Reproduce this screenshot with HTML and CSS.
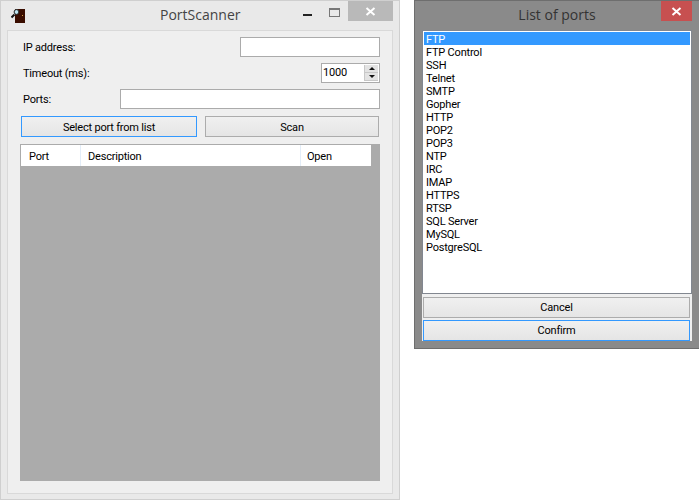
FILE: index.html
```html
<!DOCTYPE html>
<html lang="en">

<head>
    <meta charset="UTF-8">
    <title>PortScanner</title>
    <link rel="stylesheet" href="styles.css">
</head>

<body>

    <!-- Main window -->
    <div class="window main-window">
        <div class="titlebar">
            <svg class="app-icon" width="16" height="16" viewBox="0 0 16 16">
                <rect x="4" y="1" width="10" height="14" fill="#3a0d00"/>
                <rect x="11" y="7" width="1" height="1" fill="#d8a040"/>
                <path d="M0.5 9.5 L3.5 6.5" stroke="#111" stroke-width="2"/>
                <circle cx="5.5" cy="4" r="2.4" fill="#bfe6f2" stroke="#222" stroke-width="1"/>
            </svg>
            <div class="title">PortScanner</div>
            <div class="controls">
                <div class="minimize"></div>
                <div class="maximize"></div>
                <div class="close close-grey">
                    <svg width="11" height="9" viewBox="0 0 11 9"><path d="M1.5 1 L9.5 8 M9.5 1 L1.5 8" stroke="#fff" stroke-width="2"/></svg>
                </div>
            </div>
        </div>
        <div class="client">
            <div class="form-row">
                <label>IP address:</label>
                <input class="field ip-field" type="text">
            </div>
            <div class="form-row">
                <label>Timeout (ms):</label>
                <div class="spinner">
                    <span class="spinner-value">1000</span>
                    <div class="spinner-buttons">
                        <div class="spin-btn"><i class="arrow-up"></i></div>
                        <div class="spin-btn"><i class="arrow-down"></i></div>
                    </div>
                </div>
            </div>
            <div class="form-row">
                <label>Ports:</label>
                <input class="field ports-field" type="text">
            </div>
            <div class="button-row">
                <button class="btn btn-focus select-btn">Select port from list</button>
                <button class="btn scan-btn">Scan</button>
            </div>
            <div class="grid">
                <div class="grid-header">
                    <div class="col col-port">Port</div>
                    <div class="col col-desc">Description</div>
                    <div class="col col-open">Open</div>
                </div>
            </div>
        </div>
    </div>

    <!-- Port list window (inactive look) -->
    <div class="window list-window">
        <div class="titlebar">
            <div class="title">List of ports</div>
            <div class="close close-red">
                <svg width="11" height="9" viewBox="0 0 11 9"><path d="M1.5 1 L9.5 8 M9.5 1 L1.5 8" stroke="#fff" stroke-width="2"/></svg>
            </div>
        </div>
        <div class="list-client">
            <div class="listbox">
                <div class="item selected">FTP</div>
                <div class="item">FTP Control</div>
                <div class="item">SSH</div>
                <div class="item">Telnet</div>
                <div class="item">SMTP</div>
                <div class="item">Gopher</div>
                <div class="item">HTTP</div>
                <div class="item">POP2</div>
                <div class="item">POP3</div>
                <div class="item">NTP</div>
                <div class="item">IRC</div>
                <div class="item">IMAP</div>
                <div class="item">HTTPS</div>
                <div class="item">RTSP</div>
                <div class="item">SQL Server</div>
                <div class="item">MySQL</div>
                <div class="item">PostgreSQL</div>
            </div>
            <button class="btn list-btn">Cancel</button>
            <button class="btn btn-focus list-btn">Confirm</button>
        </div>
    </div>

</body>

</html>
```

FILE: styles.css
```css
body {
    margin: 0;
    background: #fff;
    font-family: "Roboto", "Liberation Sans", Arial, sans-serif;
    font-size: 11px;
    letter-spacing: -0.2px;
    color: #000;
}

.window {
    position: absolute;
    top: 0;
    box-sizing: border-box;
}

.titlebar {
    display: flex;
    align-items: flex-start;
    height: 30px;
    position: relative;
}

.title {
    font-family: "Open Sans", sans-serif;
    font-size: 14px;
    letter-spacing: 0;
    color: #444;
    line-height: 20px;
    padding-top: 4px;
}

/* Main window */
.main-window {
    left: 0;
    width: 400px;
    height: 500px;
    background: #e9e9e9;
    border: 1px solid #cfcfcf;
    padding: 0 6px 6px;
}

.main-window .titlebar {
    height: 29px;
}

.main-window .title {
    position: absolute;
    left: 153px;
}

.app-icon {
    margin: 7px 0 0 4px;
}

.controls {
    display: flex;
    margin-left: auto;
}

.minimize {
    width: 9px;
    height: 2px;
    margin: 13px 17px 0 0;
    background: #222;
}

.maximize {
    width: 9px;
    height: 6px;
    margin: 7px 8px 0 0;
    border: 1px solid #777;
    border-top-width: 2px;
}

.close {
    display: flex;
    align-items: center;
    justify-content: center;
    height: 20px;
}

.close-grey {
    width: 45px;
    background: #b9b9b9;
}

.client {
    box-sizing: border-box;
    height: 464px;
    background: #efefef;
    border: 1px solid #d9d9d9;
    padding: 6px 12px 12px;
}

.form-row {
    display: flex;
    align-items: center;
    justify-content: space-between;
    height: 20px;
    margin-bottom: 6px;
    padding-left: 3px;
}

.field {
    box-sizing: border-box;
    height: 20px;
    margin: 0;
    padding: 0;
    background: #fff;
    border: 1px solid #ababab;
    outline: none;
}

.ip-field {
    width: 140px;
}

.ports-field {
    width: 260px;
}

.spinner {
    box-sizing: border-box;
    display: flex;
    justify-content: space-between;
    width: 59px;
    height: 20px;
    background: #fff;
    border: 1px solid #ababab;
    padding: 1px;
}

.spinner-value {
    line-height: 16px;
}

.spinner-buttons {
    display: flex;
    flex-direction: column;
    width: 14px;
}

.spin-btn {
    flex: 1;
    display: flex;
    align-items: center;
    justify-content: center;
    background: #e3e3e3;
    border: 1px solid #c8c8c8;
    border-width: 0 0 1px 1px;
}

.arrow-up {
    border: 3px solid transparent;
    border-top: 0;
    border-bottom: 3px solid #111;
}

.arrow-down {
    border: 3px solid transparent;
    border-bottom: 0;
    border-top: 3px solid #111;
}

.button-row {
    display: flex;
    gap: 8px;
    margin: 7px 0 7px 1px;
}

.button-row .btn {
    padding-top: 2px;
}

.btn {
    box-sizing: border-box;
    height: 21px;
    margin: 0;
    padding: 0;
    font-family: "Roboto", "Liberation Sans", Arial, sans-serif;
    font-size: 11px;
    letter-spacing: -0.2px;
    color: #000;
    background: linear-gradient(#f0f0f0, #e5e5e5);
    border: 1px solid #acacac;
}

.btn-focus {
    border-color: #3399ff;
}

.select-btn {
    width: 176px;
}

.scan-btn {
    width: 174px;
}

.grid {
    height: 336px;
    background: #ababab;
    padding: 1px 9px 0 1px;
}

.grid-header {
    display: flex;
    height: 21px;
    background: #fff;
    line-height: 23px;
}

.col {
    box-sizing: border-box;
    padding-left: 8px;
    border-right: 1px solid #e3edf8;
}

.col-port {
    width: 60px;
}

.col-desc {
    width: 220px;
    padding-left: 7px;
}

.col-open {
    flex: 1;
    padding-left: 6px;
    border-right: 0;
}

/* Port list window */
.list-window {
    left: 414px;
    width: 285px;
    height: 349px;
    background: #8a8a8a;
    border: 1px solid #6e6e6e;
    border-right: 0;
    padding: 0 7px 0 7px;
}

.list-window .titlebar {
    justify-content: center;
    height: 29px;
}

.list-window .title {
    color: #333;
}

.close-red {
    position: absolute;
    top: 0;
    right: 0;
    width: 31px;
    background: #c75050;
}

.list-client {
    display: flex;
    flex-direction: column;
    gap: 2px;
    background: #efefef;
    padding: 0 2px 0 1px;
    height: 311px;
    box-sizing: border-box;
}

.listbox {
    box-sizing: border-box;
    height: 264px;
    margin: 0 -2px 1px -1px;
    background: #fff;
    border: 1px solid #828790;
    padding: 1px;
}

.item {
    height: 13px;
    line-height: 15px;
    padding-left: 2px;
}

.selected {
    background: #3399ff;
    color: #fff;
}

.list-btn {
    width: 100%;
    flex: none;
}
```
